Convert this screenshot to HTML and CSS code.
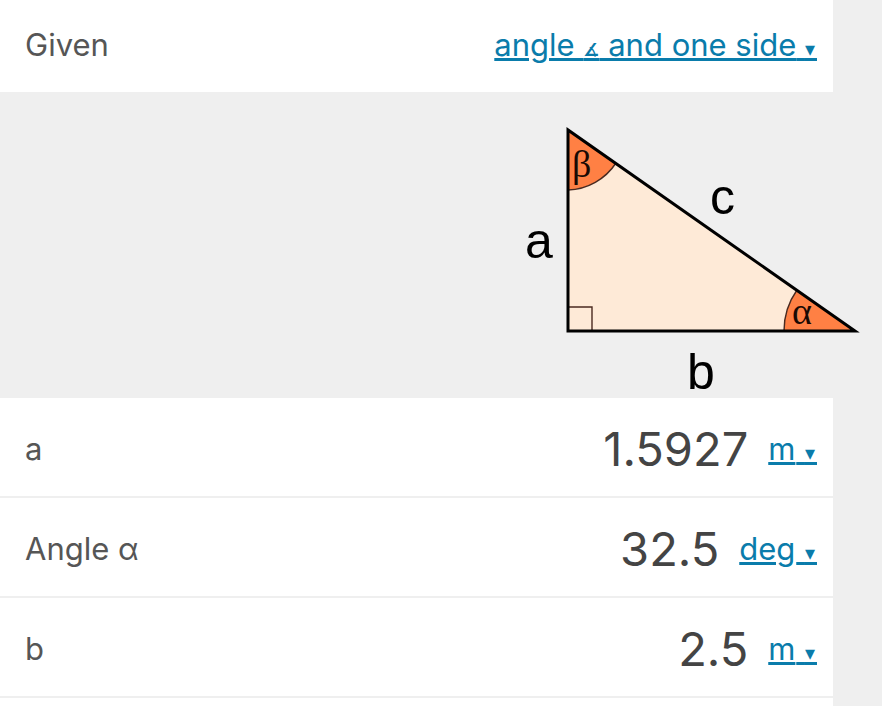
FILE: index.html
```
<!DOCTYPE html>
<html lang="en">
<head>
<meta charset="utf-8">
<meta name="viewport" content="width=device-width, initial-scale=1">
<title>Right triangle calculator</title>
<link rel="stylesheet" href="styles.css">
</head>
<body>
<main class="calculator">
  <section class="row row-given">
    <span class="label" id="given-label">Given</span>
    <button class="picker" type="button" aria-haspopup="listbox" aria-labelledby="given-label given-value"><span id="given-value">angle <span class="angle-sign">∡</span> and one side</span> <span class="arrow">▾&#8202;</span></button>
  </section>

  <figure class="diagram">
    <svg class="triangle" viewBox="520 92 362 306" role="img" aria-label="Right triangle with sides a, b, c and angles α, β">
      <path class="fill-body" d="M568 130V331H855Z"/>
      <path class="fill-angle" d="M568 130V190A60 60 0 0 0 616 163Z"/>
      <path class="fill-angle" d="M855 331H784A71 71 0 0 1 797 290Z"/>
      <path class="thin" d="M568 190A60 60 0 0 0 616 163M784 331A71 71 0 0 1 797 290M568 307H592V331"/>
      <path class="outline" d="M568 130V331H855Z"/>
      <text class="side" x="525" y="258">a</text>
      <text class="side" x="687" y="389">b</text>
      <text class="side" x="710" y="214">c</text>
      <text class="greek" x="572" y="177">β</text>
      <text class="greek" x="792" y="324">α</text>
    </svg>
  </figure>

  <section class="row">
    <label class="label" for="side-a">a</label>
    <input class="value" id="side-a" type="text" inputmode="decimal" value="1.5927">
    <span class="unit"><select class="unit-select" aria-label="Unit of a"><option>m</option></select><span class="unit-arrow"> <span class="arrow">▾&#8202;</span></span></span>
  </section>
  <section class="row">
    <label class="label" for="angle-alpha">Angle α</label>
    <input class="value" id="angle-alpha" type="text" inputmode="decimal" value="32.5">
    <span class="unit"><select class="unit-select" aria-label="Unit of angle α"><option>deg</option></select><span class="unit-arrow"> <span class="arrow">▾&#8202;</span></span></span>
  </section>
  <section class="row">
    <label class="label" for="side-b">b</label>
    <input class="value" id="side-b" type="text" inputmode="decimal" value="2.5">
    <span class="unit"><select class="unit-select" aria-label="Unit of b"><option>m</option></select><span class="unit-arrow"> <span class="arrow">▾&#8202;</span></span></span>
  </section>
  <div class="row-next"></div>
</main>
</body>
</html>
```
FILE: styles.css
```
* {
  box-sizing: border-box;
}

body {
  margin: 0;
  background: #efefef;
  color: #565656;
  font: 31px/40px Inter, "Liberation Sans", sans-serif;
}

.calculator {
  display: flex;
  flex-direction: column;
  min-height: 100vh;
}

.row {
  display: flex;
  align-items: center;
  margin-right: 49px;
  padding: 21px 16px 17px 25px;
  border-bottom: 2px solid #efefef;
  background: #fff;
}

.row-given {
  justify-content: space-between;
  padding: 25px 16px 27px 25px;
  border-bottom: 0;
}

.row-next {
  flex: 1;
  margin-right: 49px;
  background: #fff;
}

.label {
  flex: none;
}

.picker,
.unit-select {
  margin: 0;
  padding: 0;
  border: 0;
  background: none;
  color: #0a7cab;
  font: inherit;
  white-space: pre;
  cursor: pointer;
}

.picker,
.unit-select,
.unit-arrow {
  text-decoration: underline;
  text-decoration-thickness: 3px;
  text-underline-offset: 2px;
}

.unit-select {
  appearance: none;
}

.unit {
  flex: none;
  display: flex;
  align-items: baseline;
  margin-left: 20px;
  color: #0a7cab;
}

.unit-arrow {
  white-space: pre;
  pointer-events: none;
}

.arrow {
  font-family: "DejaVu Sans", sans-serif;
  font-size: 20px;
  line-height: 1;
}

.angle-sign {
  font-family: "DejaVu Sans", sans-serif;
  font-size: 18px;
  font-weight: 700;
  line-height: 1;
}

.value {
  flex: 1;
  min-width: 0;
  height: 60px;
  padding: 0;
  border: 0;
  background: none;
  color: #444;
  font: inherit;
  font-size: 47px;
  line-height: 60px;
  text-align: right;
}

.diagram {
  margin: 0;
}

.triangle {
  display: block;
  width: 362px;
  max-width: 100%;
  margin-left: auto;
}

.fill-body {
  fill: #feead7;
}

.fill-angle {
  fill: #ff8044;
}

.thin {
  fill: none;
  stroke: #4a2a20;
  stroke-width: 1.4;
}

.outline {
  fill: none;
  stroke: #000;
  stroke-width: 3;
  stroke-miterlimit: 10;
}

.side {
  font-family: "Liberation Sans", sans-serif;
  font-size: 50px;
  fill: #000;
}

.greek {
  font-family: "Liberation Serif", serif;
  font-size: 38px;
  fill: #1a0a04;
}
```
